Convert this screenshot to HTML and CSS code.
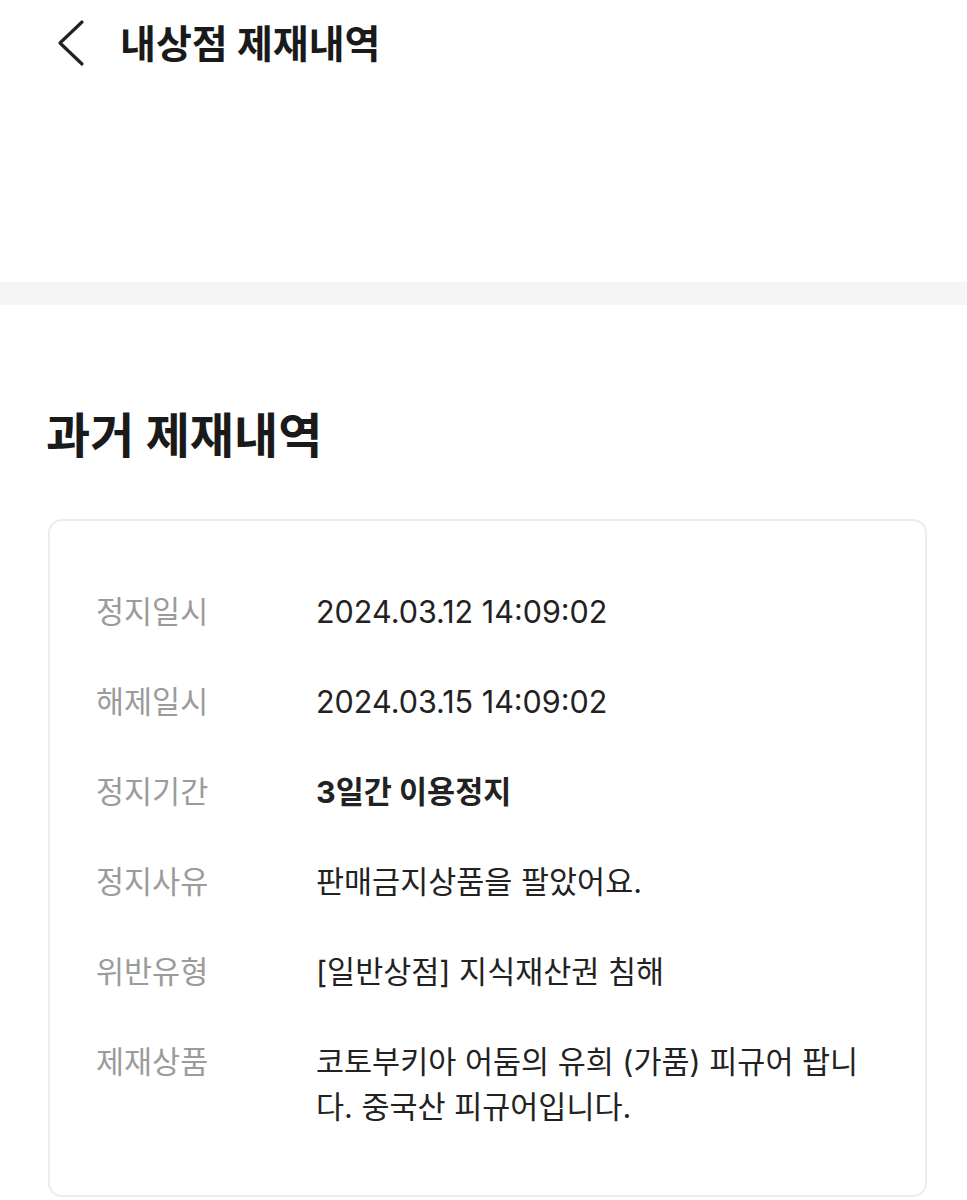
FILE: index.html
```html
<!DOCTYPE html>
<html lang="ko">
<head>
  <meta charset="utf-8">
  <title>내상점 제재내역</title>
  <link rel="stylesheet" href="styles.css">
</head>
<body>
  <div class="header">
    <svg class="back" width="34" height="50" viewBox="0 0 34 50">
      <polyline points="28,4 6,25 28,46" fill="none" stroke="#222" stroke-width="3.2" stroke-linecap="round" stroke-linejoin="round"/>
    </svg>
    <h1 class="page-title">내상점 제재내역</h1>
  </div>

  <div class="divider"></div>

  <div class="section">
    <h2 class="section-title">과거 제재내역</h2>

    <div class="card">
      <div class="row">
        <div class="label">정지일시</div>
        <div class="value">2024.03.12 14:09:02</div>
      </div>
      <div class="row">
        <div class="label">해제일시</div>
        <div class="value">2024.03.15 14:09:02</div>
      </div>
      <div class="row">
        <div class="label">정지기간</div>
        <div class="value strong">3일간 이용정지</div>
      </div>
      <div class="row">
        <div class="label">정지사유</div>
        <div class="value">판매금지상품을 팔았어요.</div>
      </div>
      <div class="row">
        <div class="label">위반유형</div>
        <div class="value">[일반상점] 지식재산권 침해</div>
      </div>
      <div class="row">
        <div class="label">제재상품</div>
        <div class="value">코토부키아 어둠의 유희 (가품) 피규어 팝니다. 중국산 피규어입니다.</div>
      </div>
    </div>
  </div>
</body>
</html>
```

FILE: styles.css
```css
body {
  margin: 0;
  background-color: #fff;
  color: #222;
  font-family: "Inter", "Noto Sans CJK KR", sans-serif;
}
.header {
  display: flex;
  align-items: flex-start;
  height: 282px;
  padding-left: 54px;
  box-sizing: border-box;
}
.back {
  margin-top: 18px;
}
.page-title {
  margin: 0 0 0 32px;
  padding-top: 16px;
  font-size: 39px;
  line-height: 56px;
  font-weight: 700;
  color: #1a1a1a;
}
.divider {
  height: 23px;
  background-color: #f5f5f5;
}
.section {
  padding: 103px 40px 0 48px;
}
.section-title {
  margin: 0 0 55px -2px;
  font-size: 48px;
  line-height: 56px;
  font-weight: 700;
  color: #1a1a1a;
}
.card {
  border: 2px solid #ececec;
  border-radius: 14px;
  padding: 68px 60px 66px 46px;
  display: flex;
  flex-direction: column;
  gap: 45px;
}
.row {
  display: grid;
  grid-template-columns: 220px 1fr;
  font-size: 30.5px;
  line-height: 45px;
}
.label {
  color: #9b9b9b;
}
.value {
  color: #222;
  word-break: break-all;
}
.strong {
  font-weight: 700;
}
```
